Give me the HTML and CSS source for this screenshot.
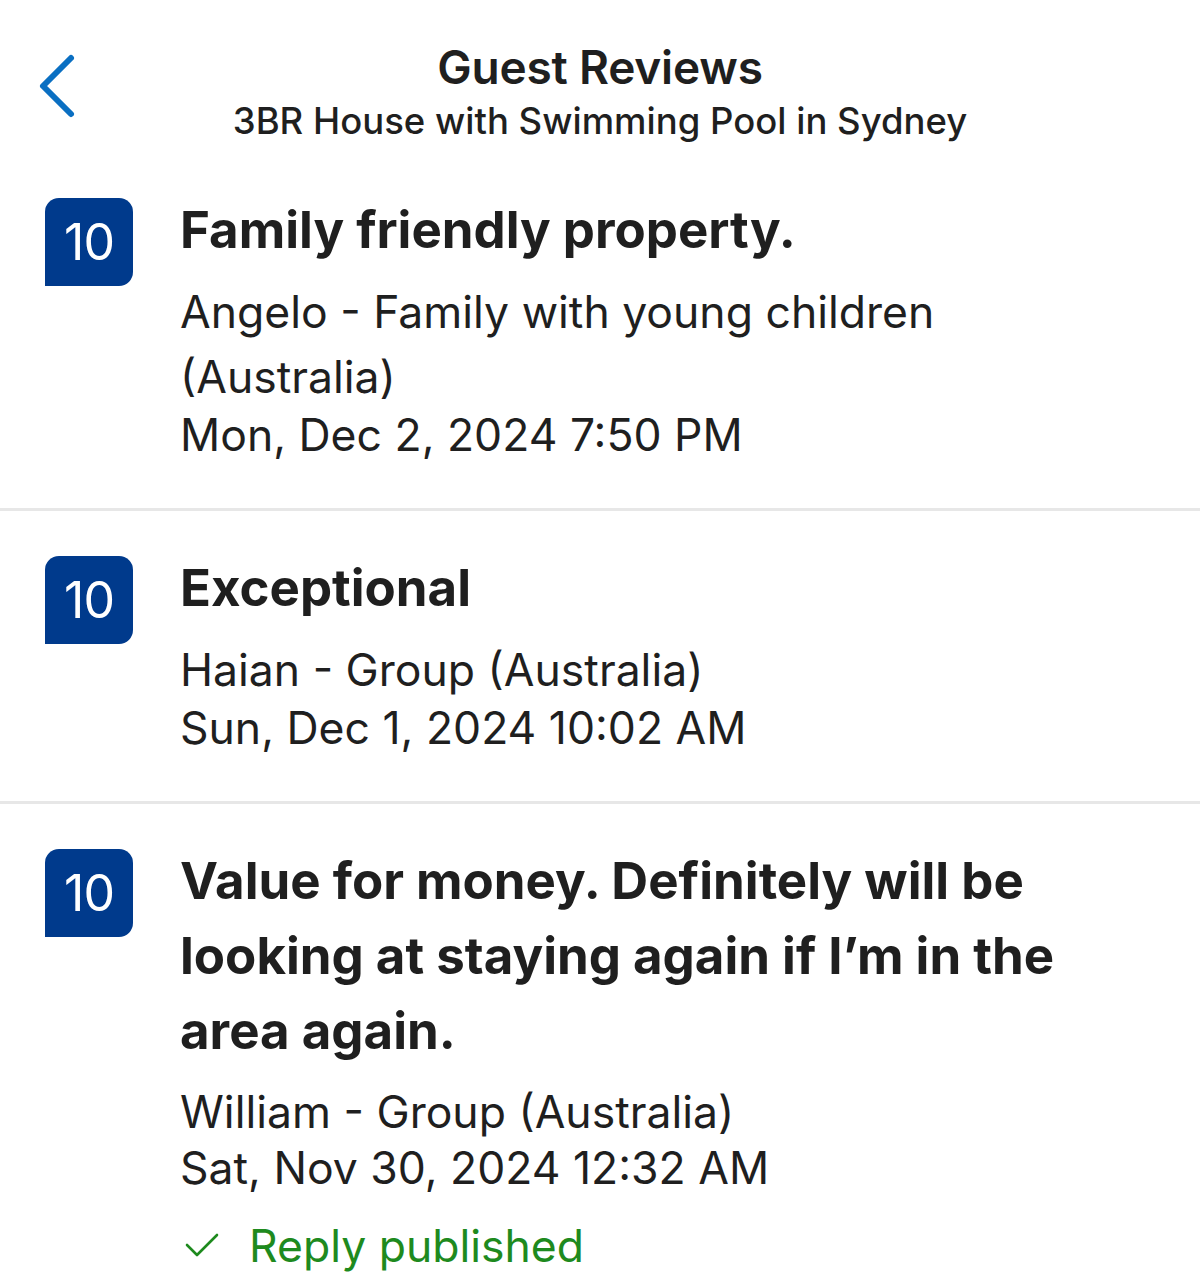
FILE: index.html
```html
<!DOCTYPE html>
<html>
<head>
<meta charset="utf-8">
<link rel="stylesheet" href="styles.css">
</head>
<body>
<header class="topbar">
  <button class="back" aria-label="Back">
    <svg width="40" height="66" viewBox="0 0 40 66"><path d="M34 5 L6 33 L34 61" fill="none" stroke="#0a6fc2" stroke-width="6" stroke-linecap="round" stroke-linejoin="round"/></svg>
  </button>
  <div class="titles">
    <h1 class="title">Guest Reviews</h1>
    <p class="subtitle">3BR House with Swimming Pool in Sydney</p>
  </div>
</header>
<main>
  <section class="review">
    <div class="score">10</div>
    <div class="body">
      <h2 class="headline">Family friendly property.</h2>
      <p class="author">Angelo - Family with young children (Australia)</p>
      <p class="date">Mon, Dec 2, 2024 7:50 PM</p>
    </div>
  </section>
  <section class="review">
    <div class="score">10</div>
    <div class="body">
      <h2 class="headline">Exceptional</h2>
      <p class="author">Haian - Group (Australia)</p>
      <p class="date">Sun, Dec 1, 2024 10:02 AM</p>
    </div>
  </section>
  <section class="review last">
    <div class="score">10</div>
    <div class="body">
      <h2 class="headline">Value for money. Definitely will be looking at staying again if I’m in the area again.</h2>
      <p class="author">William - Group (Australia)</p>
      <p class="date">Sat, Nov 30, 2024 12:32 AM</p>
      <p class="reply">
        <svg class="check" width="34" height="26" viewBox="0 0 34 26"><path d="M2 12 L12 22 L32 2" fill="none" stroke="#1e8a1e" stroke-width="2.6" stroke-linecap="round" stroke-linejoin="round"/></svg>
        <span>Reply published</span>
      </p>
    </div>
  </section>
</main>
</body>
</html>
```
FILE: styles.css
```css
* { box-sizing: border-box; }
html, body { margin: 0; padding: 0; background: #fff; }
body {
  font-family: Inter, "Noto Sans", "Liberation Sans", sans-serif;
  color: #1f1f1f;
  width: 1200px;
}
.topbar {
  position: relative;
  height: 154px;
  display: flex;
  justify-content: center;
}
.back {
  position: absolute;
  left: 37px;
  top: 53px;
  border: 0;
  background: none;
  padding: 0;
  width: 40px;
  height: 66px;
}
.back svg { display: block; }
.titles {
  text-align: center;
  padding-top: 40px;
}
.title {
  margin: 0;
  font-size: 46px;
  font-weight: 600;
  line-height: 54px;
  letter-spacing: -0.2px;
}
.subtitle {
  margin: 0;
  font-size: 36.5px;
  font-weight: 500;
  line-height: 54px;
}
.review {
  display: flex;
  gap: 47px;
  padding: 39px 40px 47px 45px;
  border-bottom: 3px solid #e7e7e7;
}
.review:first-child { padding-top: 38px; }
.review.last { border-bottom: 0; }
.score {
  flex: 0 0 88px;
  height: 88px;
  margin-top: 6px;
  background: #003a8c;
  color: #fff;
  border-radius: 14px 14px 14px 0;
  display: flex;
  align-items: center;
  justify-content: center;
  font-size: 50px;
  font-weight: 400;
  letter-spacing: -1px;
}
.body { flex: 1; }
.headline {
  margin: 0 0 13px;
  font-size: 51px;
  font-weight: 700;
  line-height: 75px;
  letter-spacing: 0;
}
.author {
  margin: 0;
  font-size: 44.5px;
  line-height: 65px;
  font-weight: 400;
}
.date {
  margin: 0;
  font-size: 44.5px;
  line-height: 51px;
  font-weight: 400;
}
.review.last .author { line-height: 62px; }
.reply {
  margin: 24px 0 0;
  display: flex;
  align-items: center;
  gap: 30px;
  color: #1e8a1e;
  font-size: 44.5px;
  line-height: 56px;
}
.check { margin-left: 5px; }
```
